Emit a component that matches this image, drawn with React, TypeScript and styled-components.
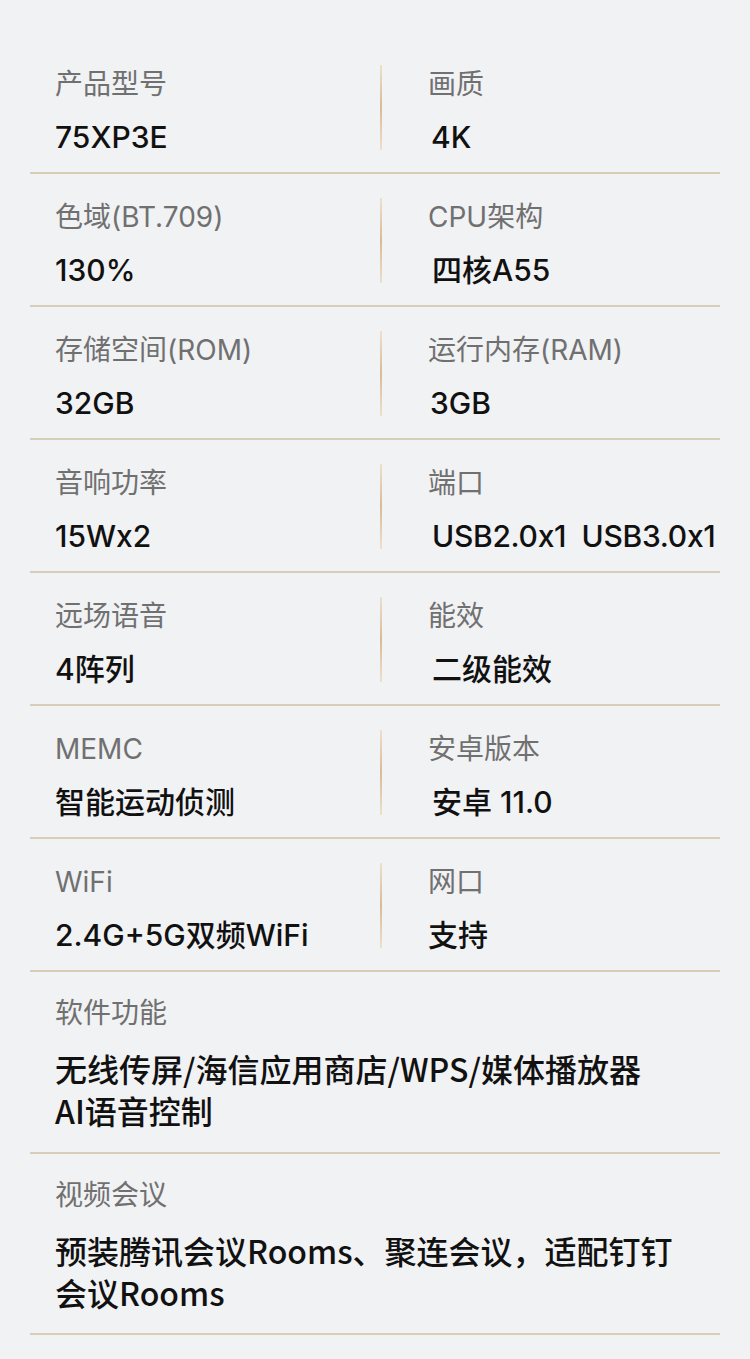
import React from "react";
import styled, { createGlobalStyle } from "styled-components";

const GlobalStyle = createGlobalStyle`
  html, body {
    margin: 0;
    padding: 0;
    background: #f1f2f4;
  }
  body {
    font-family: Inter, "Noto Sans CJK SC", sans-serif;
  }
`;

const Page = styled.div`
  width: 750px;
  min-height: 1359px;
  box-sizing: border-box;
  background: #f1f2f4;
  padding: 41px 30px 0;
`;

const PairRow = styled.div`
  display: grid;
  grid-template-columns: 350px 2px 1fr;
  height: 133px;
  box-sizing: border-box;
  border-bottom: 2px solid #dacdb6;
`;

const FullRow = styled.div<{ $h: number }>`
  box-sizing: border-box;
  height: ${(p) => p.$h}px;
  padding: 22px 0 0 25px;
  border-bottom: 2px solid #dacdb6;
`;

const Cell = styled.div<{ $right?: boolean }>`
  padding: 24px 0 0 ${(p) => (p.$right ? "46px" : "25px")};
`;

const Divider = styled.div`
  margin-top: 24px;
  width: 2px;
  height: 85px;
  background: linear-gradient(#ecdfcf, #dcb993 50%, #ecdfcf);
`;

const Label = styled.div`
  font-family: Inter, "Noto Sans CJK SC", sans-serif;
  font-size: 28px;
  font-weight: 400;
  line-height: 38px;
  color: #707070;
  white-space: nowrap;
`;

const Value = styled.div<{ $indent?: number }>`
  font-family: Inter, "Noto Sans CJK SC", sans-serif;
  font-size: 30px;
  font-weight: 500;
  line-height: 46px;
  margin-top: 11px;
  color: #111;
  white-space: pre;
  padding-left: ${(p) => p.$indent ?? 0}px;
`;

const NarrowValue = styled(Value)`
  letter-spacing: -0.3px;
`;

const LongValue = styled.div`
  font-family: "Noto Sans CJK SC", sans-serif;
  font-size: 32px;
  font-weight: 500;
  line-height: 42px;
  margin-top: 15px;
  letter-spacing: 0px;
  color: #111;
  white-space: nowrap;
`;

type Spec = { label: string; value: string; indent?: number; narrow?: boolean };

const pairs: [Spec, Spec][] = [
  [
    { label: "产品型号", value: "75XP3E" },
    { label: "画质", value: "4K", indent: 3 },
  ],
  [
    { label: "色域(BT.709)", value: "130%" },
    { label: "CPU架构", value: "四核A55", indent: 4 },
  ],
  [
    { label: "存储空间(ROM)", value: "32GB" },
    { label: "运行内存(RAM)", value: "3GB", indent: 2 },
  ],
  [
    { label: "音响功率", value: "15Wx2" },
    { label: "端口", value: "USB2.0x1  USB3.0x1", indent: 4, narrow: true },
  ],
  [
    { label: "远场语音", value: "4阵列" },
    { label: "能效", value: "二级能效", indent: 4 },
  ],
  [
    { label: "MEMC", value: "智能运动侦测" },
    { label: "安卓版本", value: "安卓 11.0", indent: 4 },
  ],
  [
    { label: "WiFi", value: "2.4G+5G双频WiFi" },
    { label: "网口", value: "支持" },
  ],
];

const SpecCell = ({ spec, right }: { spec: Spec; right?: boolean }) => {
  const V = spec.narrow ? NarrowValue : Value;
  return (
    <Cell $right={right}>
      <Label>{spec.label}</Label>
      <V $indent={spec.indent}>{spec.value}</V>
    </Cell>
  );
};

export default function App() {
  return (
    <>
      <GlobalStyle />
      <Page>
        {pairs.map(([l, r]) => (
          <PairRow key={l.label}>
            <SpecCell spec={l} />
            <Divider />
            <SpecCell spec={r} right />
          </PairRow>
        ))}
        <FullRow $h={182}>
          <Label>软件功能</Label>
          <LongValue>
            无线传屏/海信应用商店/WPS/媒体播放器
            <br />
            AI语音控制
          </LongValue>
        </FullRow>
        <FullRow $h={181}>
          <Label>视频会议</Label>
          <LongValue>
            预装腾讯会议Rooms、聚连会议，适配钉钉
            <br />
            会议Rooms
          </LongValue>
        </FullRow>
      </Page>
    </>
  );
}
